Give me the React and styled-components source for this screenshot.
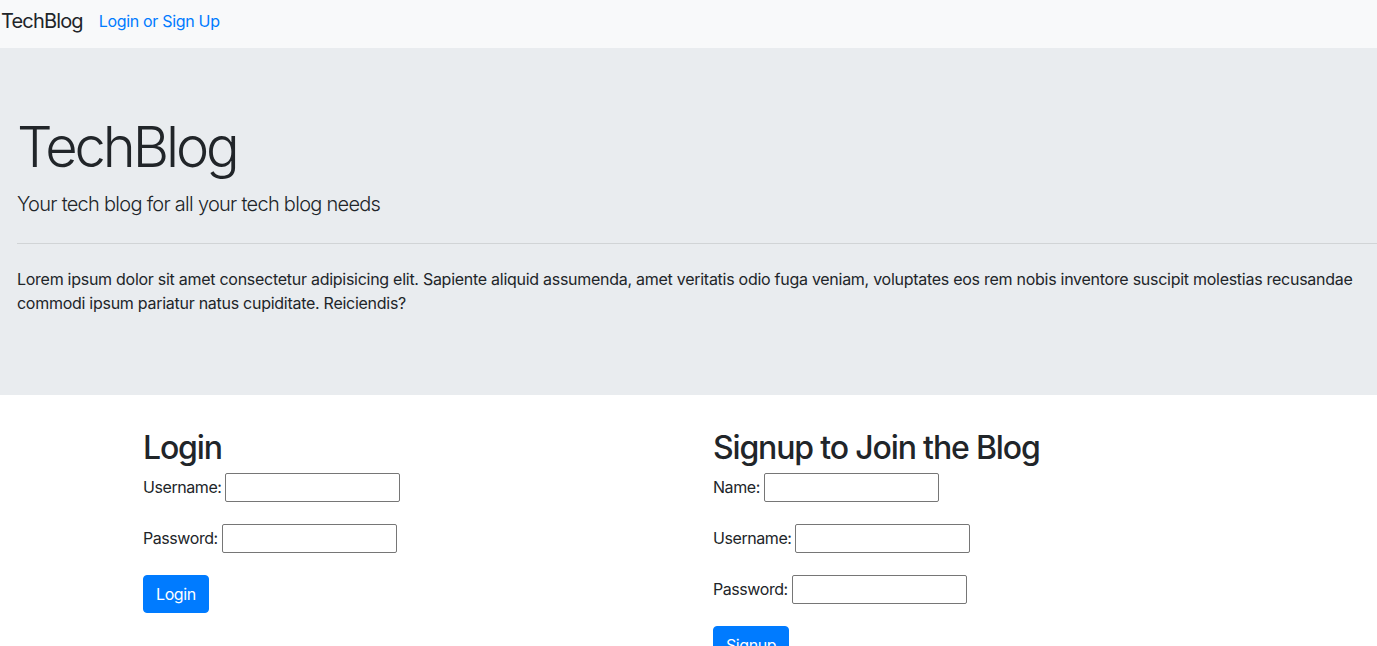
import React from 'react';
import styled, { createGlobalStyle } from 'styled-components';

const GlobalStyle = createGlobalStyle`
    body {
        margin: 0;
        font-family: Inter, "Noto Sans", "Liberation Sans", sans-serif;
        font-size: 16px;
        line-height: 1.5;
        letter-spacing: -0.017em;
        color: #212529;
        background: #fff;
    }
`

const Navbar = styled.nav`
    display: flex;
    align-items: center;
    height: 48px;
    box-sizing: border-box;
    padding: 0 0 6px 1px;
    background-color: #f8f9fa;

    .brand {
        font-size: 20px;
        line-height: 30px;
        letter-spacing: -0.042em;
        color: #212529;
        text-decoration: none;
        margin-right: 16px;
    }

    .link {
        font-size: 16px;
        line-height: 24px;
        letter-spacing: -0.02em;
        color: #007bff;
        text-decoration: none;
    }
`

const Jumbotron = styled.header`
    background-color: #e9ecef;
    padding: 65px 0 64px 17px;
    margin-bottom: 32px;

    h1 {
        font-size: 56px;
        font-weight: 300;
        line-height: 1.2;
        letter-spacing: -0.055em;
        margin: 1px 0 8px;
    }

    .lead {
        font-size: 20px;
        font-weight: 300;
        line-height: 30px;
        letter-spacing: -0.036em;
        margin: 0;
    }

    hr {
        border: 0;
        border-top: 1px solid rgba(0, 0, 0, 0.1);
        margin: 24px 0 23px;
    }

    p.text {
        margin: 0 15px 16px 0;
    }
`

const Columns = styled.main`
    display: grid;
    grid-template-columns: 570px 570px;
    padding-left: 143px;
`

const Column = styled.section`
    h2 {
        font-size: 32px;
        font-weight: 500;
        line-height: 1.2;
        letter-spacing: -0.036em;
        margin: 2px 0 5px;
    }
`

const FormRow = styled.div`
    display: flex;
    align-items: center;
    gap: 4px;
    margin-bottom: 22px;
    height: 29px;

    label {
        letter-spacing: -0.027em;
    }
`

const Input = styled.input`
    width: 175px;
    height: 29px;
    box-sizing: border-box;
    border: 1px solid #767676;
    border-radius: 2px;
    padding: 1px 2px;
    font: inherit;
    background: #fff;
`

const Button = styled.button`
    font: inherit;
    font-size: 16px;
    line-height: 24px;
    letter-spacing: -0.025em;
    padding: 6px 12px;
    color: #fff;
    background-color: #007bff;
    border: 1px solid #007bff;
    border-radius: 4px;
    cursor: pointer;
`

const Field = ({ label, type = 'text' }) => (
    <FormRow>
        <label>{label}</label>
        <Input type={type} />
    </FormRow>
)

const App = () => {
    return (
        <>
            <GlobalStyle />
            <Navbar>
                <a className="brand" href="#">TechBlog</a>
                <a className="link" href="#">Login or Sign Up</a>
            </Navbar>
            <Jumbotron>
                <h1>TechBlog</h1>
                <p className="lead">Your tech blog for all your tech blog needs</p>
                <hr />
                <p className="text">Lorem ipsum dolor sit amet consectetur adipisicing elit. Sapiente aliquid assumenda, amet veritatis odio fuga veniam, voluptates eos rem nobis inventore suscipit molestias recusandae commodi ipsum pariatur natus cupiditate. Reiciendis?</p>
            </Jumbotron>
            <Columns>
                <Column>
                    <h2>Login</h2>
                    <Field label="Username:" />
                    <Field label="Password:" type="password" />
                    <Button>Login</Button>
                </Column>
                <Column>
                    <h2>Signup to Join the Blog</h2>
                    <Field label="Name:" />
                    <Field label="Username:" />
                    <Field label="Password:" type="password" />
                    <Button>Signup</Button>
                </Column>
            </Columns>
        </>
    );
}

export default App;
